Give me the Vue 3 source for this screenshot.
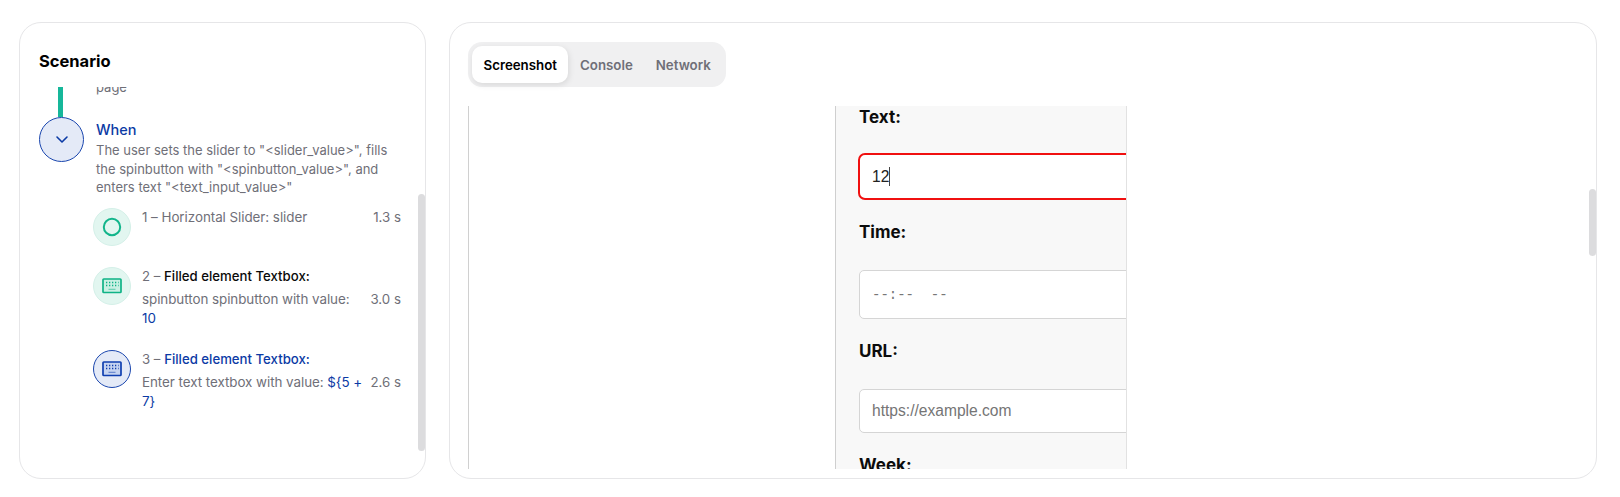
<script setup>
const steps = [
  { n: 1, icon: 'circle', tone: 'green', plain: 'Horizontal Slider: slider', time: '1.3 s' },
  { n: 2, icon: 'keyboard', tone: 'green', title: 'Filled element Textbox:', desc: 'spinbutton spinbutton with value:', value: '10', time: '3.0 s' },
  { n: 3, icon: 'keyboard', tone: 'blue', title: 'Filled element Textbox:', desc: 'Enter text textbox with value:', value: '${5 + 7}', time: '2.6 s' },
]
const tabs = ['Screenshot', 'Console', 'Network']
</script>

<template>
  <div class="page">
    <section class="card left">
      <h2 class="heading">Scenario</h2>
      <div class="timeline">
        <div class="prev-row">
          <div class="rail"><span class="bar"></span></div>
          <p class="prev-text">page</p>
        </div>
        <div class="when-row">
          <div class="when-icon">
            <svg width="14" height="9" viewBox="0 0 14 9" fill="none"><path d="M2 2l5 5 5-5" stroke="#0b3aa5" stroke-width="1.6" stroke-linecap="round" stroke-linejoin="round"/></svg>
          </div>
          <div class="when-body">
            <div class="when-title">When</div>
            <p class="when-desc">The user sets the slider to "&lt;slider_value&gt;", fills the spinbutton with "&lt;spinbutton_value&gt;", and enters text "&lt;text_input_value&gt;"</p>
          </div>
        </div>
        <div class="steps">
          <div v-for="s in steps" :key="s.n" class="step">
            <div class="step-icon" :class="s.tone">
              <svg v-if="s.icon === 'circle'" width="20" height="20" viewBox="0 0 20 20" fill="none"><circle cx="10" cy="10" r="8.2" stroke="#12b58b" stroke-width="2"/></svg>
              <svg v-else width="20" height="16" viewBox="0 0 20 16" fill="none">
                <rect x="1" y="1" width="18" height="13.5" rx="0.8" :fill="s.tone === 'green' ? '#c9f0e3' : '#c5d3f0'" stroke="currentColor" stroke-width="1.7"/>
                <path d="M4 4.5h1.3M7 4.5h1.3M10 4.5h1.3M13 4.5h1.3M16 4.5h.6M4 7.5h1.3M7 7.5h1.3M10 7.5h1.3M13 7.5h1.3M16 7.5h.6" stroke="currentColor" stroke-width="1.3"/>
                <path d="M6.5 11.3h7" stroke="currentColor" stroke-width="1" opacity=".6"/>
              </svg>
            </div>
            <div class="step-body">
              <template v-if="s.plain">
                <div class="step-line">{{ s.n }} – {{ s.plain }}</div>
              </template>
              <template v-else>
                <div class="step-title">{{ s.n }} – <span :class="s.tone === 'blue' ? 'accent' : 'dark'">{{ s.title }}</span></div>
                <div class="step-line">{{ s.desc }} <span class="accent">{{ s.value }}</span></div>
              </template>
            </div>
            <div class="step-time" :class="{ lower: !s.plain }">{{ s.time }}</div>
          </div>
        </div>
      </div>
      <div class="scroll scroll-left"></div>
    </section>

    <section class="card right">
      <div class="tabs">
        <button v-for="(t, i) in tabs" :key="t" class="tab" :class="{ active: i === 0 }">{{ t }}</button>
      </div>
      <div class="viewport">
        <div class="shot">
          <div class="form">
            <div class="label first">Text:</div>
            <div class="field focused"><span>12</span><i class="caret"></i></div>
            <div class="label l-time">Time:</div>
            <div class="field time">--:--&nbsp;&nbsp;--</div>
            <div class="label l-url">URL:</div>
            <div class="field url">https://example.com</div>
            <div class="label l-week">Week:</div>
          </div>
        </div>
      </div>
      <div class="scroll scroll-right"></div>
    </section>
  </div>
</template>

<style>
html, body { margin: 0; background: #fff; }
</style>

<style scoped>
.page {
  box-sizing: border-box;
  width: 1620px;
  height: 497px;
  padding: 22px 23px 18px 19px;
  display: flex;
  gap: 23px;
  font-family: "Inter", "Noto Sans", sans-serif;
  overflow: hidden;
}
.card {
  box-sizing: border-box;
  position: relative;
  height: 457px;
  border: 1px solid #e6e6e8;
  border-radius: 22px;
  background: #fff;
  overflow: hidden;
}
.left { width: 407px; flex: none; }
.right { flex: 1; }
.heading {
  margin: 28px 0 0 19px;
  font-size: 16.5px;
  line-height: 20px;
  font-weight: 700;
  color: #000;
}
.timeline { height: 387px; margin-top: 16px; overflow: hidden; }
.prev-row { display: flex; height: 30px; }
.rail { width: 76px; flex: none; position: relative; }
.bar { display: block; width: 5px; height: 30px; margin-left: 38px; background: #16b79a; }
.prev-text {
  margin: -9px 0 0 0;
  font-size: 13px;
  line-height: 18px;
  color: #6f6f78;
}
.when-row { display: flex; margin-left: 19px; }
.when-icon {
  box-sizing: border-box;
  width: 45px; height: 45px; flex: none;
  border-radius: 50%;
  border: 1px solid #1a46ae;
  background: #e4eaf7;
  display: flex; align-items: center; justify-content: center;
}
.when-body { margin-left: 12px; width: 296px; }
.when-title { font-size: 14.5px; line-height: 18px; font-weight: 500; color: #0b3aa5; margin-top: 4px; }
.when-desc {
  margin: 2px 0 0;
  font-size: 13px;
  line-height: 18.5px;
  color: #6f6f78;
}
.steps { margin: 11px 0 0 73px; width: 308px; }
.step { display: flex; align-items: flex-start; margin-bottom: 22px; }
.step:first-child { margin-bottom: 21px; }
.step-icon {
  box-sizing: border-box;
  width: 38px; height: 38px; flex: none;
  border-radius: 50%;
  display: flex; align-items: center; justify-content: center;
}
.step-icon.green { background: #e2f6f0; border: 1px solid #d4f0e8; color: #0fb386; }
.step-icon.blue { background: #e4eaf7; border: 1px solid #1a46ae; color: #0f3fb0; }
.step-body { margin-left: 11px; flex: 1; min-width: 0; font-size: 13.4px; color: #6f6f78; }
.step-title { font-size: 13.2px; line-height: 18px; margin-bottom: 5px; }
.step-line { line-height: 19px; letter-spacing: -0.05px; }
.dark { color: #0a0a0a; font-weight: 500; }
.accent { color: #0b3aa5; font-weight: 400; }
.step-title .accent { font-weight: 500; }
.step-time { flex: none; margin-left: 6px; font-size: 13.3px; line-height: 19px; color: #6f6f78; }
.step-time.lower { margin-top: 23px; }
.scroll { position: absolute; right: 0; width: 7px; border-radius: 4px; background: #dcdcde; }
.scroll-left { top: 171px; height: 257px; }
.scroll-right { top: 166px; height: 67px; }
.tabs {
  display: inline-flex;
  margin: 19px 0 0 18px;
  padding: 4px;
  height: 45px;
  box-sizing: border-box;
  border-radius: 14px;
  background: #f0f0f1;
}
.tab {
  border: 0;
  background: none;
  padding: 0 11.5px;
  height: 37px;
  font-family: inherit;
  font-size: 13.3px;
  font-weight: 600;
  color: #6f6f78;
  border-radius: 10px;
}
.tab.active { background: #fff; color: #000; box-shadow: 1px 2px 6px rgba(0,0,0,.1); }
.viewport {
  margin: 19px 0 0 18px;
  height: 363px;
  border-left: 1px solid #d0d0d0;
  overflow: hidden;
}
.shot { padding-left: 366px; }
.form {
  box-sizing: border-box;
  width: 292px;
  height: 400px;
  background: #f8f8f8;
  border-left: 1px solid #cfcfcf;
  border-right: 1px solid #e2e2e2;
  padding-left: 23px;
  overflow: hidden;
  font-family: "Inter", "Liberation Sans", sans-serif;
}
.label { font-size: 17px; font-weight: 700; line-height: 22px; color: #0c0c0c; }
.field {
  box-sizing: border-box;
  width: 320px;
  border: 1px solid #d5d5d5;
  border-radius: 5px;
  background: #fff;
  padding-left: 12px;
  display: flex;
  align-items: center;
  font-family: "Liberation Sans", sans-serif;
  font-size: 15.6px;
}
.focused {
  margin-top: 25px;
  height: 47px;
  border: 2px solid #f01010;
  border-radius: 7px;
  margin-left: -1px;
  color: #222;
}
.caret { display: block; width: 1px; height: 19px; background: #444; }
.l-time { margin-top: 21px; }
.time {
  margin-top: 27px;
  height: 49px;
  color: #777;
  font-family: "Liberation Mono", monospace;
  font-size: 14px;
}
.l-url { margin-top: 21px; }
.url { margin-top: 27px; height: 44px; color: #757575; }
.l-week { margin-top: 21px; }
</style>
